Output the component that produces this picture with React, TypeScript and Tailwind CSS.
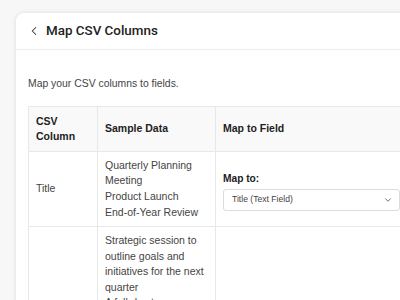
import { ChevronDown, ChevronLeft } from "lucide-react";

const font = { fontFamily: "'Liberation Sans', Arial, sans-serif" };

export default function App() {
  return (
    <div className="h-[300px] w-[400px] overflow-hidden bg-[#f7f7f7] pl-[16px] pt-[13px]" style={font}>
      <div className="w-[420px] rounded-tl-lg bg-white shadow-[0_0_4px_rgba(0,0,0,0.12)]">
        <div className="flex h-[37px] items-center gap-[5px] border-b border-[#ececec] pl-[11px]">
          <ChevronLeft size={14} strokeWidth={1.75} className="text-[#333]" />
          <h1 className="font-['Roboto',sans-serif] text-[13.4px] font-medium text-[#222]">Map CSV Columns</h1>
        </div>
        <div className="px-[12px] pt-[27px]">
          <p className="text-[10.4px] leading-[14px] text-[#444]">Map your CSV columns to fields.</p>
          <table className="mt-[15px] w-[380px] table-fixed border-collapse text-[10.5px] text-[#444]">
            <thead>
              <tr className="h-[45px] bg-[#f9f9f9] text-left text-[#222]">
                <th className="w-[69px] border border-[#e8e8e8] px-[7px] leading-[15px] font-semibold">
                  CSV
                  <br />
                  Column
                </th>
                <th className="w-[118px] border border-[#e8e8e8] px-[7px] font-semibold">Sample Data</th>
                <th className="border border-[#e8e8e8] px-[7px] font-semibold">Map to Field</th>
              </tr>
            </thead>
            <tbody>
              <tr className="h-[75px]">
                <td className="border border-[#e8e8e8] px-[7px]">Title</td>
                <td className="border border-[#e8e8e8] pl-[7px] pr-[4px] leading-[15.6px]">
                  Quarterly Planning Meeting
                  <br />
                  Product Launch
                  <br />
                  End-of-Year Review
                </td>
                <td className="border border-[#e8e8e8] px-[7px]">
                  <div className="mt-[4px] text-[10.2px] leading-[13px] font-semibold text-[#222]">Map to:</div>
                  <div className="mt-[4px] flex h-[22px] items-center justify-between rounded-[3px] border border-[#dcdcdc] pl-[8px] pr-[6px] text-[8.6px] text-[#444]">
                    <span>Title (Text Field)</span>
                    <ChevronDown size={10} strokeWidth={2} className="text-[#555]" />
                  </div>
                </td>
              </tr>
              <tr className="align-top">
                <td className="border border-[#e8e8e8] px-[7px]" />
                <td className="border border-[#e8e8e8] pl-[7px] pr-[4px] pt-[6px] leading-[15.6px]">
                  Strategic session to outline goals and initiatives for the next quarter
                  <br />
                  A full-day team workshop
                </td>
                <td className="border border-[#e8e8e8] px-[7px]" />
              </tr>
            </tbody>
          </table>
        </div>
      </div>
    </div>
  );
}
